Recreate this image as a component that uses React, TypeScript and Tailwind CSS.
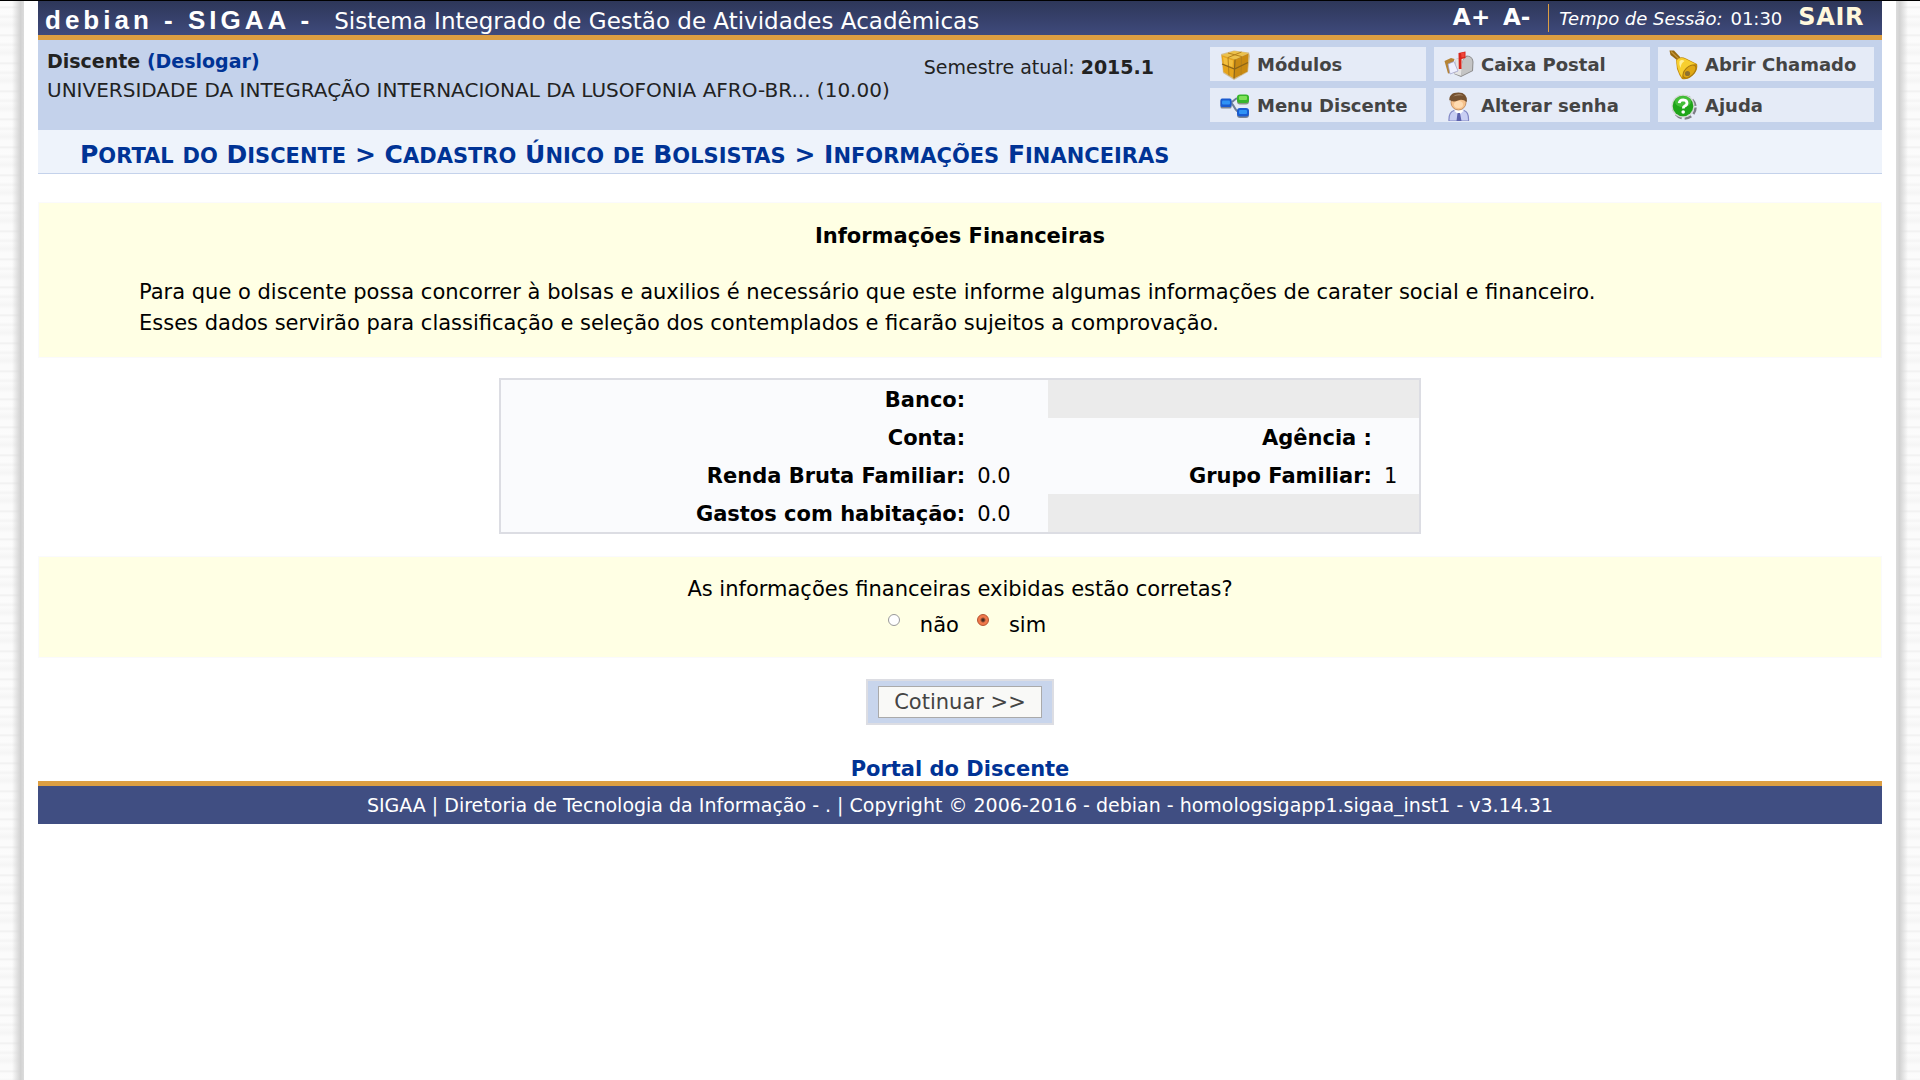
import React, { useState } from 'react';

const BoxIcon = () => (
  <svg viewBox="0 0 29 30" className="h-[30px] w-[29px]" aria-hidden="true">
    <path d="M0 4 L13 0.5 L28 2.5 L29 6 L27 22 L13 30 L2 23 Z" fill="#b98a2a" opacity="0.45" />
    <path d="M0.5 5 L13 1 L27.5 3 L14 9.5 Z" fill="#ecc14b" />
    <path d="M0.5 5 L14 9.5 L13 28.5 L2.5 22 Z" fill="#e5a41c" />
    <path d="M14 9.5 L27.5 3.5 L26.5 21.5 L13 28.5 Z" fill="#c98a12" />
    <path d="M2 7 L12 10.5 L11.5 17 L3 14 Z" fill="#f6c546" opacity="0.8" />
    <path d="M7 3 L20.5 6.5 M20.5 2 L7 7.5 M7 7.5 L8 25.5 M20.5 6.5 L20 25" stroke="#b5811c" strokeWidth="1" fill="none" />
    <path d="M1 14 L13.5 19 L27 12.5 M14 9.5 L13 28.5" stroke="#8b6418" strokeWidth="1.2" fill="none" />
  </svg>
);

const TreeIcon = () => (
  <svg viewBox="0 0 30 26" className="h-[26px] w-[30px]" aria-hidden="true">
    <path d="M10 9.5 C15 9 13 5 19 5 M10 9.5 C15 11 14 19 20 19" stroke="#6d7f99" strokeWidth="2" fill="none" />
    <rect x="0.5" y="6.5" width="11" height="9" rx="1.5" fill="#7a8494" />
    <rect x="0.5" y="5.5" width="11" height="8.5" rx="1.5" fill="#1a5bd0" />
    <rect x="2" y="7.5" width="8" height="4" rx="1" fill="#2f93f5" />
    <rect x="17" y="2.5" width="12" height="9" rx="3" fill="#8a9484" />
    <rect x="17" y="1.5" width="12" height="8.5" rx="3" fill="#37b62a" />
    <rect x="19" y="3" width="8" height="4" rx="1" fill="#80e05a" />
    <rect x="17" y="16" width="12" height="9" rx="3" fill="#7a8494" />
    <rect x="17" y="15" width="12" height="8.5" rx="3" fill="#1a5bd0" />
    <rect x="19" y="17" width="8" height="4" rx="1" fill="#2f93f5" />
  </svg>
);

const MailIcon = () => (
  <svg viewBox="0 0 30 28" className="h-[28px] w-[30px]" aria-hidden="true">
    <path d="M12 8 L23 4.5 Q29 5 29.5 11 L29 20 L17 26 L10 23 Z" fill="#8f8f8f" />
    <path d="M12 8 L22 5 Q18 8 18 13 L17.5 25 L10 22.5 Z" fill="#e3e3e3" />
    <path d="M18 13 Q19 6 24 5.5 Q28 6 28.5 11 L28 19.5 L18 24.5 Z" fill="#c4c4c4" />
    <path d="M0.5 10 L7 7 L10.5 8 L9 13 L12 21 L4 22.5 Z" fill="#b58335" />
    <path d="M4 13 L10 10.5 L14 20 L6 23 Z" fill="#eef0ff" stroke="#9a9cc8" strokeWidth="0.7" />
    <path d="M14.5 2 L21.5 0.5 V7 L17.5 8 V18 H14.8 Z" fill="#d8251b" />
    <path d="M17 2 L20.5 1.3 V6 L17.5 6.5 Z" fill="#f0463a" />
  </svg>
);

const UserIcon = () => (
  <svg viewBox="0 0 24 29" className="h-[29px] w-6" aria-hidden="true">
    <path d="M2 29 Q1.5 20 7 18.5 L12 18 L17 18.5 Q22 20 21.5 29 Z" fill="#c9cff3" stroke="#8187c4" strokeWidth="1.2" />
    <path d="M7 18.5 L12 23 L17 18.5 L12 17 Z" fill="#fff" />
    <path d="M10.5 21 H13 L14.5 29 H9.5 Z" fill="#5d62ad" />
    <ellipse cx="11.5" cy="10.5" rx="7.5" ry="7.5" fill="#f6c28c" stroke="#b9814f" strokeWidth="0.8" />
    <ellipse cx="11.5" cy="12.5" rx="4.5" ry="3.5" fill="#ffdcb2" />
    <path d="M2.5 10 Q1 0.5 11.5 0.5 Q20.5 0.5 20 10 Q15 6.5 11 8.5 Q6 10.5 2.5 8 Z" fill="#765230" />
    <path d="M6 4.5 Q11 0.5 16.5 3.5 Q12 2.5 6 4.5 Z" fill="#b29577" />
  </svg>
);

const BellIcon = () => (
  <svg viewBox="0 0 29 30" className="h-[30px] w-[29px]" aria-hidden="true">
    <path d="M0.5 0.5 H5 L11.5 7.5 L8.5 10.5 L1.5 5 Z" fill="#96690f" />
    <path d="M2 1.5 L10 9" stroke="#c69638" strokeWidth="1.2" />
    <path d="M7 10 Q11 5.5 17 8.5 L28 14 Q29.5 20 23.5 25.5 Q18 30.5 13 29 Q10 25 8 19 Z" fill="#c28a0a" />
    <path d="M7.5 10.5 Q11 6.5 16.5 9 L26.5 14 Q21 15 17 19.5 Q13.5 23.5 13 27.5 Q10 23 8.5 17.5 Z" fill="#f7cf2f" />
    <path d="M10.5 11 Q13 9 15.5 11 Q12 13 11.5 18 Q9.5 14 10.5 11 Z" fill="#fff09a" />
    <ellipse cx="20.5" cy="21.5" rx="8" ry="4.5" transform="rotate(-45 20.5 21.5)" fill="#e0a813" stroke="#a87a10" strokeWidth="1" />
    <circle cx="18.5" cy="23.5" r="2.6" fill="#8e7230" />
  </svg>
);

const HelpIcon = () => (
  <svg viewBox="0 0 27 27" className="h-[27px] w-[27px]" aria-hidden="true">
    <circle cx="14.5" cy="14.5" r="11" fill="none" stroke="#7d7d85" strokeWidth="2.5" strokeDasharray="7 3" />
    <circle cx="13" cy="13" r="11.5" fill="#d3d8d3" />
    <circle cx="13" cy="13" r="10.3" fill="#1fa51a" />
    <ellipse cx="13" cy="8.5" rx="8" ry="5.5" fill="#5bd14c" opacity="0.6" />
    <path d="M9.2 10.2 Q9.5 6.8 13.2 6.8 Q17 7 17 10 Q17 12 14.8 13 Q13.3 13.8 13.3 15.5" fill="none" stroke="#fff" strokeWidth="2.8" />
    <circle cx="13.2" cy="19" r="1.8" fill="#fff" />
  </svg>
);

const menuItems = [
  { label: 'Módulos', icon: <BoxIcon /> },
  { label: 'Caixa Postal', icon: <MailIcon /> },
  { label: 'Abrir Chamado', icon: <BellIcon /> },
  { label: 'Menu Discente', icon: <TreeIcon /> },
  { label: 'Alterar senha', icon: <UserIcon /> },
  { label: 'Ajuda', icon: <HelpIcon /> },
];

const paper =
  'bg-[repeating-linear-gradient(180deg,#fbfbfb_0px,#fbfbfb_5px,#efefef_6px,#fbfbfb_8px,#fcfcfc_13px,#f4f4f4_16px,#fbfbfb_18px,#f5f5f5_24px,#fbfbfb_28px)]';

// small caps by hand: capital letters keep the big size, the rest is smaller
const SmallCaps: React.FC<{ text: string }> = ({ text }) => (
  <>
    {text.split(' ').map((word, i) => (
      <React.Fragment key={i}>
        {i > 0 && ' '}
        {word[0] === word[0].toUpperCase() ? (
          <span className="inline-block text-[21px] uppercase first-letter:text-[25px]">{word}</span>
        ) : (
          <span className="text-[21px] uppercase">{word}</span>
        )}
      </React.Fragment>
    ))}
  </>
);

const Header: React.FC = () => (
  <header>
    <div className="flex h-[39px] items-start justify-between border-b-5 border-[#dc9e42] bg-linear-to-b from-[#2e3759] to-[#3f4a7c] text-white">
      <div className="flex items-baseline pl-[7px]">
        <h1 className="font-['Liberation_Sans',sans-serif] text-[26px] leading-[38px] font-bold tracking-[4px]">
          debian - SIGAA -
        </h1>
        <span className="pl-[21px] text-[23px]">Sistema Integrado de Gestão de Atividades Acadêmicas</span>
      </div>
      <div className="flex items-baseline pr-[18px] text-lg leading-8">
        <button className="text-[23px] font-bold tracking-wide">A+</button>
        <button className="ml-3 text-[23px] font-bold">A-</button>
        <span className="ml-[18px] h-7 w-px self-center bg-[#dc9e42]" />
        <em className="ml-2.5">Tempo de Sessão:</em>
        <span className="ml-2">01:30</span>
        <a href="#sair" className="ml-4 text-2xl leading-8 font-bold tracking-wide text-[#fff8dc]">
          SAIR
        </a>
      </div>
    </div>

    <div className="flex h-[90px] items-start bg-[#c4d2eb] pt-[7px] pr-2 pl-[9px] text-[19px] text-[#222]">
      <div className="flex-1">
        <p className="leading-7 font-bold">
          Discente{' '}
          <a href="#deslogar" className="text-[#003395]">
            (Deslogar)
          </a>
        </p>
        <p className="text-xl leading-[30px]">
          UNIVERSIDADE DA INTEGRAÇÃO INTERNACIONAL DA LUSOFONIA AFRO-BR... (10.00)
        </p>
      </div>
      <p className="mr-14 pt-1.5 leading-7">
        Semestre atual: <strong>2015.1</strong>
      </p>
      <nav className="grid grid-cols-[216px_216px_216px] gap-x-2 gap-y-[7px]">
        {menuItems.map((item) => (
          <a
            key={item.label}
            href="#menu"
            className="flex h-[34px] items-center overflow-hidden bg-[#e5ebf7] pt-0.5 pl-[9px] text-lg font-bold text-[#444]"
          >
            <span className="mr-1.5 flex w-8 shrink-0 justify-center">{item.icon}</span>
            <span className="whitespace-nowrap">{item.label}</span>
          </a>
        ))}
      </nav>
    </div>

    <h2 className="h-11 border-b border-[#c4d2eb] bg-[#eef3fb] pl-[42px] text-[25px] leading-[50px] font-bold whitespace-nowrap text-[#003395]">
      <SmallCaps text="Portal do Discente > Cadastro Único de Bolsistas > Informações Financeiras" />
    </h2>
  </header>
);

const FinancialTable: React.FC = () => (
  <table className="mx-auto mt-5 w-1/2 table-fixed border-separate border-spacing-0 border-2 border-[#dcdde3] bg-[#ebebeb]">
    <colgroup>
      <col className="w-[51%]" />
      <col className="w-[79px]" />
      <col />
      <col className="w-[43px]" />
    </colgroup>
    <tbody className="[&_td]:h-[38px] [&_td]:bg-[#fafbfd] [&_td]:px-2 [&_td]:pt-1 [&_th]:h-[38px] [&_th]:bg-[#fafbfd] [&_th]:px-1 [&_th]:pt-1 [&_th]:text-right [&_th]:whitespace-nowrap">
      <tr>
        <th scope="row">Banco:</th>
        <td></td>
      </tr>
      <tr>
        <th scope="row">Conta:</th>
        <td></td>
        <th scope="row">Agência :</th>
        <td></td>
      </tr>
      <tr>
        <th scope="row">Renda Bruta Familiar:</th>
        <td>0.0</td>
        <th scope="row">Grupo Familiar:</th>
        <td>1</td>
      </tr>
      <tr>
        <th scope="row">Gastos com habitação:</th>
        <td>0.0</td>
      </tr>
    </tbody>
  </table>
);

const Confirmation: React.FC = () => {
  const [answer, setAnswer] = useState('sim');

  return (
    <fieldset className="mt-[22px] border border-[#fafafc] bg-[#ffffe4] pt-[15px] pb-[13px] text-center">
      <legend className="float-left w-full leading-[34px]">As informações financeiras exibidas estão corretas?</legend>
      <div className="flex justify-center gap-[18px] pl-[14px] leading-[38px]">
        {['não', 'sim'].map((value) => (
          <label key={value} className="flex items-start gap-5">
            <input
              type="radio"
              name="corretas"
              value={value}
              checked={answer === value}
              onChange={() => setAnswer(value)}
              className="mt-2 size-3 appearance-none rounded-full border border-[#999] bg-white checked:border-[#b4512d] checked:bg-[radial-gradient(circle,#4a2a20_0px,#4a2a20_1px,#f0784a_3px)]"
            />
            {value}
          </label>
        ))}
      </div>
    </fieldset>
  );
};

const App: React.FC = () => (
  <div className="flex min-h-screen border-t border-black bg-white font-['DejaVu_Sans','Verdana',sans-serif] text-[21px] text-black">
    <div className={`flex w-6 shrink-0 justify-end ${paper}`}>
      <div className="w-3 bg-linear-to-r from-transparent via-[#d2d2d2] via-70% to-[#dcdcdc]" />
    </div>

    <div className="min-w-0 flex-1 px-[14px]">
      <Header />

      <main>
        <section className="mt-7 border border-[#fafafc] bg-[#ffffe4] px-[100px] pt-[18px] pb-[18px] leading-[31px]">
          <h3 className="mb-[25px] text-center font-bold">Informações Financeiras</h3>
          <p>
            Para que o discente possa concorrer à bolsas e auxilios é necessário que este informe algumas informações de
            carater social e financeiro.
            <br />
            Esses dados servirão para classificação e seleção dos contemplados e ficarão sujeitos a comprovação.
          </p>
        </section>

        <FinancialTable />
        <Confirmation />

        <div className="mt-[21px] flex justify-center">
          <div className="border-2 border-[#dcdde3] bg-[#c8d5ec] px-[10px] py-[5px]">
            <button className="block h-8 border border-[#aaa] bg-[#f9f9f7] px-[15px] leading-[30px] text-[#444]">
              Cotinuar &gt;&gt;
            </button>
          </div>
        </div>

        <p className="mt-8 text-center leading-6 font-bold">
          <a href="#portal" className="text-[#003395]">
            Portal do Discente
          </a>
        </p>
      </main>

      <footer className="border-t-5 border-[#dc9e42] bg-[#404e82] text-center text-[19px] leading-[38px] text-white">
        SIGAA | Diretoria de Tecnologia da Informação - . | Copyright © 2006-2016 - debian - homologsigapp1.sigaa_inst1 -
        v3.14.31
      </footer>
    </div>

    <div className={`w-6 shrink-0 ${paper}`}>
      <div className="h-full w-3 bg-linear-to-l from-transparent via-[#d2d2d2] via-70% to-[#dcdcdc]" />
    </div>
  </div>
);

export default App;
